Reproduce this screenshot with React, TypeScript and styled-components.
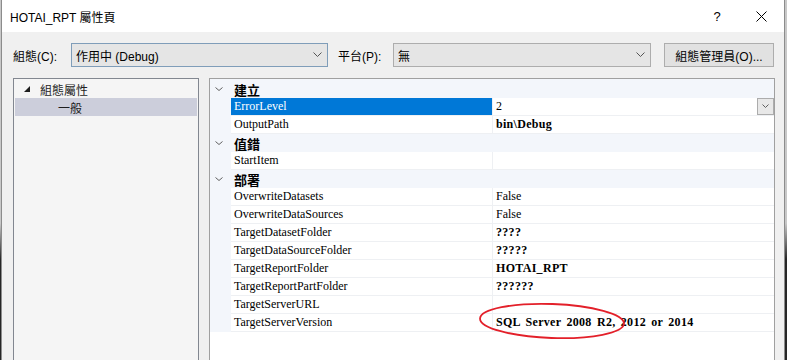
import React from 'react';
import styled, { createGlobalStyle } from 'styled-components';

const UI_FONT = '"Liberation Sans", "Noto Sans CJK TC", sans-serif';
const GRID_FONT = '"Liberation Serif", "Noto Sans CJK TC", serif';
const CJK_FONT = '"Noto Sans CJK TC", "Liberation Sans", sans-serif';

const GlobalStyle = createGlobalStyle`
  * {
    box-sizing: border-box;
  }
  html,
  body {
    margin: 0;
    padding: 0;
  }
  body {
    width: 787px;
    height: 360px;
    overflow: hidden;
    background: linear-gradient(to bottom, #c8c8c8 0%, #c8c8c8 62%, #262626 72%, #262626 100%);
    font-family: ${UI_FONT};
  }
`;

const Desktop = styled.div`
  width: 787px;
  height: 360px;
  padding-left: 1px;
  display: flex;
`;

const Window = styled.div`
  width: 784px;
  height: 360px;
  border-left: 1px solid #8c8c8c;
  border-right: 1px solid #8c8c8c;
  background: #f0f0f0;
  display: flex;
  flex-direction: column;
`;

const TitleBar = styled.div`
  height: 32px;
  background: #ffffff;
  display: flex;
  align-items: center;
  padding-left: 8px;
  flex-shrink: 0;
`;

const Title = styled.div`
  font-size: 12px;
  color: #000;
  flex-grow: 1;
`;

const HelpButton = styled.div`
  width: 30px;
  text-align: center;
  font-size: 13px;
  color: #000;
  margin-right: 14px;
`;

const CloseButton = styled.div`
  width: 30px;
  height: 32px;
  display: flex;
  align-items: center;
  justify-content: center;
  margin-right: 8px;
`;

const Toolbar = styled.div`
  display: flex;
  align-items: center;
  padding: 11px 10px 0 11px;
  flex-shrink: 0;
`;

const Label = styled.div<{ $width: number }>`
  width: ${(p) => p.$width}px;
  font-size: 12px;
  color: #000;
  flex-shrink: 0;
`;

const Combo = styled.div<{ $width: number; $focused?: boolean }>`
  width: ${(p) => p.$width}px;
  height: 24px;
  border: 1px solid ${(p) => (p.$focused ? '#7f9db9' : '#adadad')};
  background: #e5e5e5;
  display: flex;
  align-items: center;
  padding-left: 4px;
  font-size: 12px;
  color: #000;
  flex-shrink: 0;
`;

const ComboText = styled.span`
  flex-grow: 1;
`;

const ComboArrow = styled.div`
  width: 20px;
  display: flex;
  justify-content: center;
`;

const Button = styled.div`
  width: 110px;
  height: 24px;
  margin-left: 13px;
  border: 1px solid #adadad;
  background: #e1e1e1;
  display: flex;
  align-items: center;
  justify-content: center;
  font-size: 12px;
  color: #000;
`;

const Body = styled.div`
  flex-grow: 1;
  display: flex;
  gap: 10px;
  padding: 11px 9px 0 11px;
  overflow: hidden;
`;

const TreePanel = styled.div`
  width: 186px;
  flex-shrink: 0;
  border: 1px solid #828790;
  border-bottom: none;
  background: #f5f5f5;
  padding: 1px;
`;

const TreeItem = styled.div<{ $indent: number; $selected?: boolean }>`
  height: 18px;
  display: flex;
  align-items: center;
  padding-left: ${(p) => p.$indent}px;
  background: ${(p) => (p.$selected ? '#cccedb' : 'transparent')};
  font-size: 12px;
  color: #1e1e1e;
`;

const TreeToggle = styled.svg`
  margin-right: 10px;
`;

const Grid = styled.div`
  flex-grow: 1;
  position: relative;
  border: 1px solid #a0a0a0;
  border-bottom: none;
  background: #ffffff;
`;

const Rows = styled.div`
  background: #f3f6fb;
  padding-top: 1px;
`;

const CategoryRow = styled.div`
  height: 18px;
  display: flex;
  align-items: center;
`;

const Gutter = styled.div`
  width: 21px;
  height: 100%;
  flex-shrink: 0;
  display: flex;
  align-items: center;
  justify-content: center;
  padding-right: 3px;
`;

const CategoryTitle = styled.div`
  padding-left: 3px;
  font-family: ${CJK_FONT};
  font-weight: 700;
  font-size: 13px;
  color: #000;
`;

const PropRow = styled.div`
  height: 18px;
  display: flex;
`;

const NameCell = styled.div<{ $selected?: boolean }>`
  width: 262px;
  flex-shrink: 0;
  border-right: 1px solid #eef0f3;
  border-bottom: 1px solid #eef0f3;
  background: ${(p) => (p.$selected ? '#0078d7' : '#ffffff')};
  color: ${(p) => (p.$selected ? '#ffffff' : '#000000')};
  font-family: ${GRID_FONT};
  font-size: 12px;
  line-height: 17px;
  padding-left: 3px;
  white-space: nowrap;
`;

const ValueCell = styled.div<{ $bold?: boolean }>`
  flex-grow: 1;
  display: flex;
  align-items: center;
  border-bottom: 1px solid #eef0f3;
  background: #ffffff;
  font-family: ${GRID_FONT};
  font-weight: ${(p) => (p.$bold ? 700 : 400)};
  letter-spacing: ${(p) => (p.$bold ? '0.3px' : '0')};
  word-spacing: ${(p) => (p.$bold ? '2px' : '0')};
  font-size: 12px;
  line-height: 17px;
  padding-left: 3px;
  white-space: nowrap;
`;

const ValueText = styled.span`
  flex-grow: 1;
`;

const DropButton = styled.div`
  width: 17px;
  height: 17px;
  border: 1px solid #acacac;
  background: #e8e8e8;
  display: flex;
  align-items: center;
  justify-content: center;
`;

const Annotation = styled.svg`
  position: absolute;
  left: 268px;
  top: 222px;
  pointer-events: none;
`;

const Chevron = ({ w = 9, color = '#555' }: { w?: number; color?: string }) => (
  <svg width={w} height={Math.round(w / 2) + 1} viewBox={`0 0 ${w} ${Math.round(w / 2) + 1}`}>
    <polyline
      points={`0.5,0.5 ${w / 2},${Math.round(w / 2) - 0.5} ${w - 0.5},0.5`}
      fill="none"
      stroke={color}
      strokeWidth="1"
    />
  </svg>
);

interface Prop {
  name: string;
  value: string;
  bold?: boolean;
  selected?: boolean;
  dropdown?: boolean;
}

interface Section {
  title: string;
  rows: Prop[];
}

const sections: Section[] = [
  {
    title: '建立',
    rows: [
      { name: 'ErrorLevel', value: '2', selected: true, dropdown: true },
      { name: 'OutputPath', value: 'bin\\Debug', bold: true },
    ],
  },
  {
    title: '值錯',
    rows: [{ name: 'StartItem', value: '' }],
  },
  {
    title: '部署',
    rows: [
      { name: 'OverwriteDatasets', value: 'False' },
      { name: 'OverwriteDataSources', value: 'False' },
      { name: 'TargetDatasetFolder', value: '????', bold: true },
      { name: 'TargetDataSourceFolder', value: '?????', bold: true },
      { name: 'TargetReportFolder', value: 'HOTAI_RPT', bold: true },
      { name: 'TargetReportPartFolder', value: '??????', bold: true },
      { name: 'TargetServerURL', value: '' },
      { name: 'TargetServerVersion', value: 'SQL Server 2008 R2, 2012 or 2014', bold: true },
    ],
  },
];

const App = () => (
  <Desktop>
    <GlobalStyle />
    <Window>
      <TitleBar>
        <Title>HOTAI_RPT 屬性頁</Title>
        <HelpButton>?</HelpButton>
        <CloseButton>
          <svg width="11" height="11" viewBox="0 0 11 11">
            <path d="M0.5 0.5 L10.5 10.5 M10.5 0.5 L0.5 10.5" stroke="#000" strokeWidth="1" />
          </svg>
        </CloseButton>
      </TitleBar>

      <Toolbar>
        <Label $width={58}>組態(C):</Label>
        <Combo $width={257} $focused>
          <ComboText>作用中 (Debug)</ComboText>
          <ComboArrow>
            <Chevron />
          </ComboArrow>
        </Combo>
        <Label $width={55} style={{ marginLeft: 10 }}>
          平台(P):
        </Label>
        <Combo $width={258}>
          <ComboText>無</ComboText>
          <ComboArrow>
            <Chevron />
          </ComboArrow>
        </Combo>
        <Button>組態管理員(O)...</Button>
      </Toolbar>

      <Body>
        <TreePanel>
          <TreeItem $indent={9}>
            <TreeToggle width="6" height="6" viewBox="0 0 6 6">
              <polygon points="6,0 6,6 0,6" fill="#1e1e1e" />
            </TreeToggle>
            組態屬性
          </TreeItem>
          <TreeItem $indent={43} $selected>
            一般
          </TreeItem>
        </TreePanel>

        <Grid>
          <Rows>
            {sections.map((section) => (
              <React.Fragment key={section.title}>
                <CategoryRow>
                  <Gutter>
                    <Chevron w={8} color="#606060" />
                  </Gutter>
                  <CategoryTitle>{section.title}</CategoryTitle>
                </CategoryRow>
                {section.rows.map((row) => (
                  <PropRow key={row.name}>
                    <Gutter />
                    <NameCell $selected={row.selected}>{row.name}</NameCell>
                    <ValueCell $bold={row.bold}>
                      <ValueText>{row.value}</ValueText>
                      {row.dropdown && (
                        <DropButton>
                          <Chevron w={7} color="#606060" />
                        </DropButton>
                      )}
                    </ValueCell>
                  </PropRow>
                ))}
              </React.Fragment>
            ))}
          </Rows>
          <Annotation width="150" height="40" viewBox="0 0 150 40">
            <ellipse
              cx="74"
              cy="20"
              rx="72"
              ry="17"
              transform="rotate(2 74 20)"
              fill="none"
              stroke="#e3202a"
              strokeWidth="1.8"
            />
          </Annotation>
        </Grid>
      </Body>
    </Window>
  </Desktop>
);

export default App;
